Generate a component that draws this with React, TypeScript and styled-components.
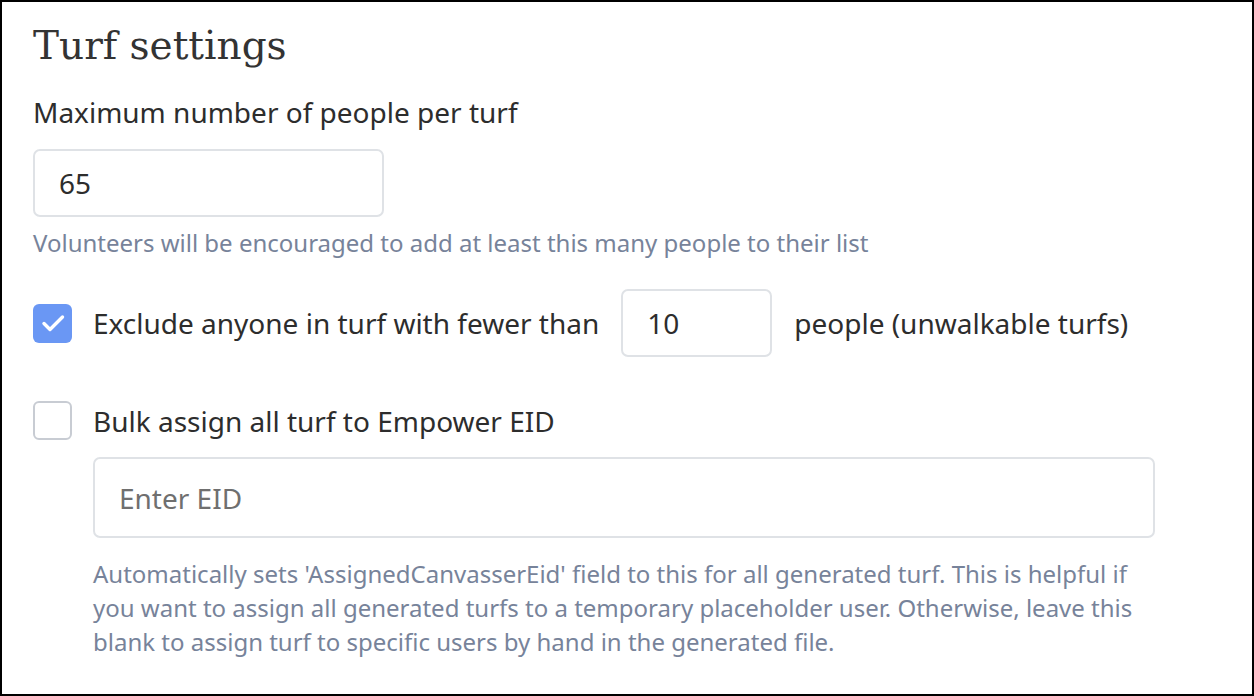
import styled, { createGlobalStyle } from "styled-components";

const GlobalStyle = createGlobalStyle`
  html, body {
    margin: 0;
    padding: 0;
    background: #ffffff;
  }
  * {
    box-sizing: border-box;
  }
`;

const Frame = styled.div`
  width: 1254px;
  height: 696px;
  border: 2px solid #000;
  background: #fff;
  padding: 18px 97px 0 31px;
  font-family: "Noto Sans", "Open Sans", sans-serif;
  color: #333;
  overflow: hidden;
`;

const Title = styled.h2`
  margin: 0 0 22px;
  font-family: "DejaVu Serif", "Liberation Serif", serif;
  font-weight: 400;
  font-size: 39px;
  line-height: 52px;
  color: #333;
`;

const Label = styled.label`
  display: block;
  font-size: 28px;
  line-height: 36px;
  color: #2d2d2d;
  margin-bottom: 19px;
`;

const TextInput = styled.input<{ $width?: number; $height?: number }>`
  display: block;
  flex: none;
  width: ${(p) => (p.$width ? `${p.$width}px` : "100%")};
  height: ${(p) => p.$height ?? 68}px;
  border: 2px solid #dfe2e6;
  border-radius: 7px;
  padding: 0 24px;
  font-family: "Noto Sans", "Open Sans", sans-serif;
  font-size: 28px;
  color: #2d2d2d;
  background: #fff;
  outline: none;
  &::placeholder {
    color: #6f6f6f;
  }
`;

const Help = styled.p`
  margin: 9px 0 0;
  font-size: 24px;
  line-height: 34px;
  color: #77839a;
`;

const CheckRow = styled.div<{ $gap?: number }>`
  display: flex;
  align-items: center;
  gap: 22px;
  margin-top: ${(p) => p.$gap ?? 0}px;
  font-size: 28px;
  line-height: 36px;
  color: #2d2d2d;
  & > span:not(:first-child) {
    margin-left: 0;
  }
`;

const Box = styled.span<{ $checked?: boolean }>`
  flex: none;
  width: 39px;
  height: 39px;
  margin-right: -1px;
  border-radius: 6px;
  display: flex;
  align-items: center;
  justify-content: center;
  background: ${(p) => (p.$checked ? "#6a97f4" : "#fff")};
  border: ${(p) => (p.$checked ? "none" : "2px solid #c8ccd3")};
`;

const Indented = styled.div`
  margin-left: 60px;
  margin-top: 17px;
`;

const Para = styled(Help)`
  margin-top: 19px;
  padding-right: 20px;
`;

function Checkbox({ checked }: { checked?: boolean }) {
  return (
    <Box $checked={checked}>
      {checked && (
        <svg width="26" height="26" viewBox="0 0 26 26" fill="none">
          <path d="M4 13.5l6 6L22.5 7" stroke="#fff" strokeWidth="3.4" strokeLinecap="round" strokeLinejoin="round" />
        </svg>
      )}
    </Box>
  );
}

export default function App() {
  return (
    <>
      <GlobalStyle />
      <Frame>
        <Title>Turf settings</Title>
        <Label>Maximum number of people per turf</Label>
        <TextInput $width={351} defaultValue="65" />
        <Help>Volunteers will be encouraged to add at least this many people to their list</Help>

        <CheckRow $gap={29}>
          <Checkbox checked />
          <span>Exclude anyone in turf with fewer than</span>
          <TextInput $width={151} defaultValue="10" />
          <span>people (unwalkable turfs)</span>
        </CheckRow>

        <CheckRow $gap={44}>
          <Checkbox />
          <span>Bulk assign all turf to Empower EID</span>
        </CheckRow>

        <Indented>
          <TextInput $height={81} placeholder="Enter EID" />
          <Para>
            Automatically sets 'AssignedCanvasserEid' field to this for all generated turf. This is helpful if you
            want to assign all generated turfs to a temporary placeholder user. Otherwise, leave this blank to assign
            turf to specific users by hand in the generated file.
          </Para>
        </Indented>
      </Frame>
    </>
  );
}
